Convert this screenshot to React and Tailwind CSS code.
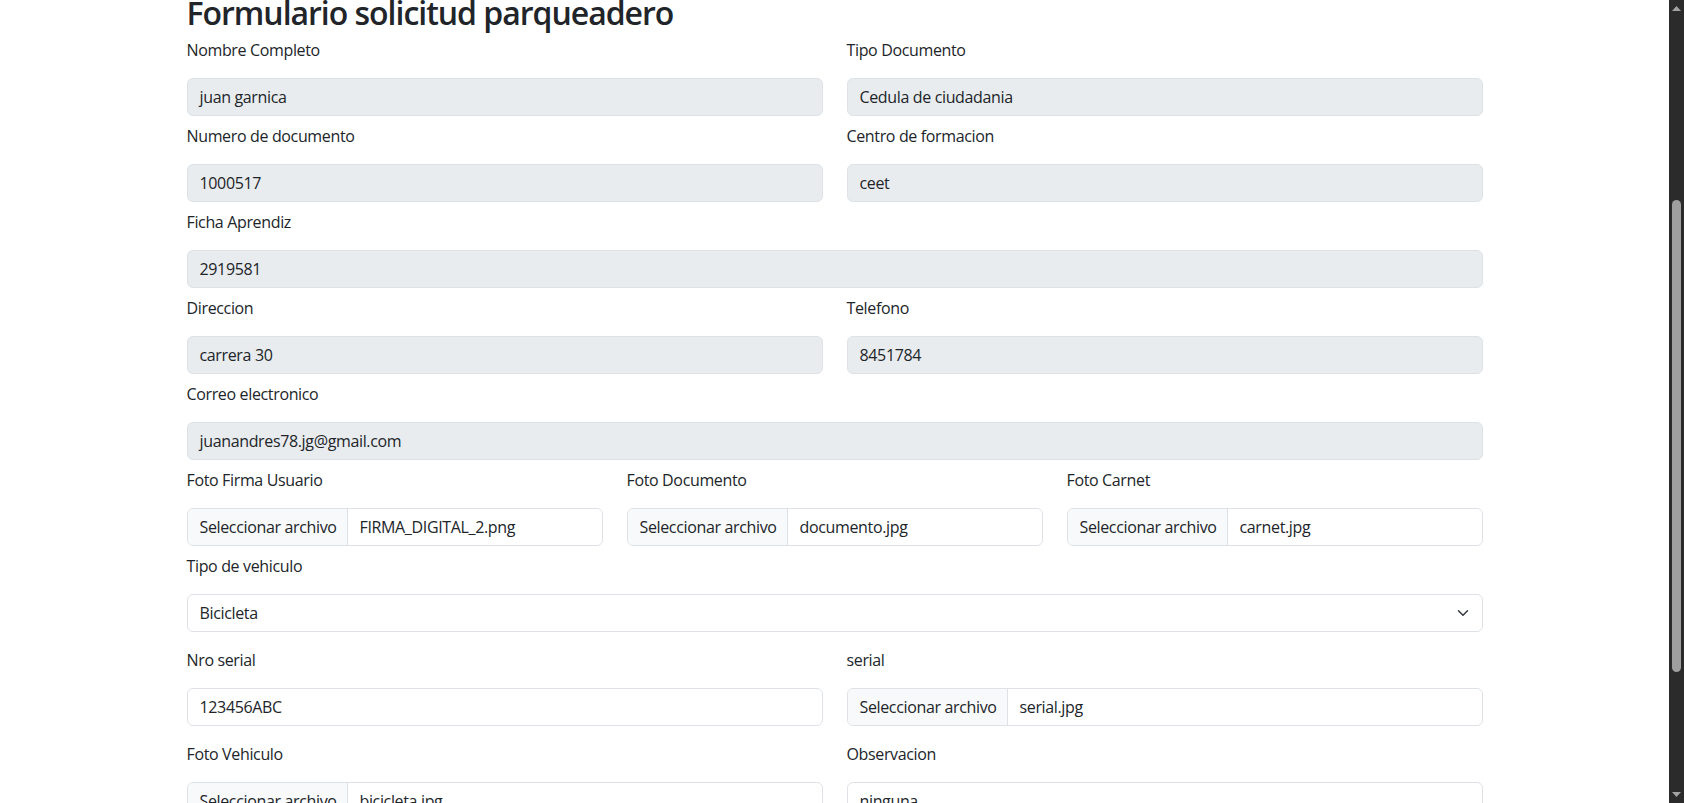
import React from 'react'

const font = { fontFamily: '"Open Sans", "Noto Sans", Arial, sans-serif' }

const Label = ({ children }) => (
  <div className="mb-4 text-[16px] leading-6 text-[#212529]">{children}</div>
)

const ReadField = ({ label, value }) => (
  <div className="mb-2">
    <Label>{label}</Label>
    <div className="h-[38px] rounded-[6px] border border-[#dee2e6] bg-[#e9ecef] px-3 py-[6px] text-[16px] leading-6 text-[#212529]">
      {value}
    </div>
  </div>
)

const TextField = ({ label, value }) => (
  <div className="mb-4">
    <Label>{label}</Label>
    <div className="h-[38px] rounded-[6px] border border-[#dee2e6] bg-white px-3 py-[6px] text-[16px] leading-6 text-[#212529]">
      {value}
    </div>
  </div>
)

const FileField = ({ label, file, className = 'mb-2' }) => (
  <div className={className}>
    <Label>{label}</Label>
    <div className="flex h-[38px] overflow-hidden rounded-[6px] border border-[#dee2e6] bg-white text-[16px] leading-6 text-[#212529]">
      <span className="flex w-[160px] shrink-0 items-center border-r border-[#dee2e6] bg-[#f8f9fa] px-3 whitespace-nowrap">
        Seleccionar archivo
      </span>
      <span className="flex items-center px-3 whitespace-nowrap">{file}</span>
    </div>
  </div>
)

// bootstrap's select arrow, drawn at 12px
const Chevron = () => (
  <svg width="12" height="12" viewBox="0 0 16 16" fill="none">
    <path d="M2 5l6 6 6-6" stroke="#343a40" strokeWidth="2" strokeLinecap="round" strokeLinejoin="round" />
  </svg>
)

const Scrollbar = () => (
  <aside className="flex h-full w-[15px] shrink-0 flex-col items-center bg-[#2b2b2b]">
    <svg className="mt-[6px]" width="9" height="5" viewBox="0 0 9 5">
      <path d="M0 5L4.5 0L9 5Z" fill="#a3a3a3" />
    </svg>
    <div className="mt-[189px] h-[472px] w-[9px] rounded-full bg-[#9f9f9f]" />
    <svg className="mt-auto mb-[6px]" width="9" height="5" viewBox="0 0 9 5">
      <path d="M0 0L9 0L4.5 5Z" fill="#a3a3a3" />
    </svg>
  </aside>
)

export default function App() {
  return (
    <div className="flex h-screen overflow-hidden bg-white tracking-[-0.022em]" style={font}>
      <main className="flex-1 overflow-hidden">
        <div className="mx-auto max-w-[1320px] px-3">
          <h1 className="-mt-[6px] mb-[6px] text-[32px] font-semibold leading-[1.2] tracking-[-0.032em] text-[#212529]">
            Formulario solicitud parqueadero
          </h1>

          <div className="grid grid-cols-2 gap-x-6">
            <ReadField label="Nombre Completo" value="juan garnica" />
            <ReadField label="Tipo Documento" value="Cedula de ciudadania" />
            <ReadField label="Numero de documento" value="1000517" />
            <ReadField label="Centro de formacion" value="ceet" />
          </div>

          <ReadField label="Ficha Aprendiz" value="2919581" />

          <div className="grid grid-cols-2 gap-x-6">
            <ReadField label="Direccion" value="carrera 30" />
            <ReadField label="Telefono" value="8451784" />
          </div>

          <ReadField label="Correo electronico" value="juanandres78.jg@gmail.com" />

          <div className="grid grid-cols-3 gap-x-6">
            <FileField label="Foto Firma Usuario" file="FIRMA_DIGITAL_2.png" />
            <FileField label="Foto Documento" file="documento.jpg" />
            <FileField label="Foto Carnet" file="carnet.jpg" />
          </div>

          <div className="mb-4">
            <Label>Tipo de vehiculo</Label>
            <div className="flex h-[38px] items-center justify-between rounded-[6px] border border-[#dee2e6] bg-white pr-[13px] pl-3 text-[16px] leading-6 text-[#212529]">
              <span>Bicicleta</span>
              <Chevron />
            </div>
          </div>

          <div className="grid grid-cols-2 gap-x-6">
            <TextField label="Nro serial" value="123456ABC" />
            <FileField label="serial" file="serial.jpg" className="mb-4" />
            <FileField label="Foto Vehiculo" file="bicicleta.jpg" className="mb-4" />
            <TextField label="Observacion" value="ninguna" />
          </div>
        </div>
      </main>
      <Scrollbar />
    </div>
  )
}
